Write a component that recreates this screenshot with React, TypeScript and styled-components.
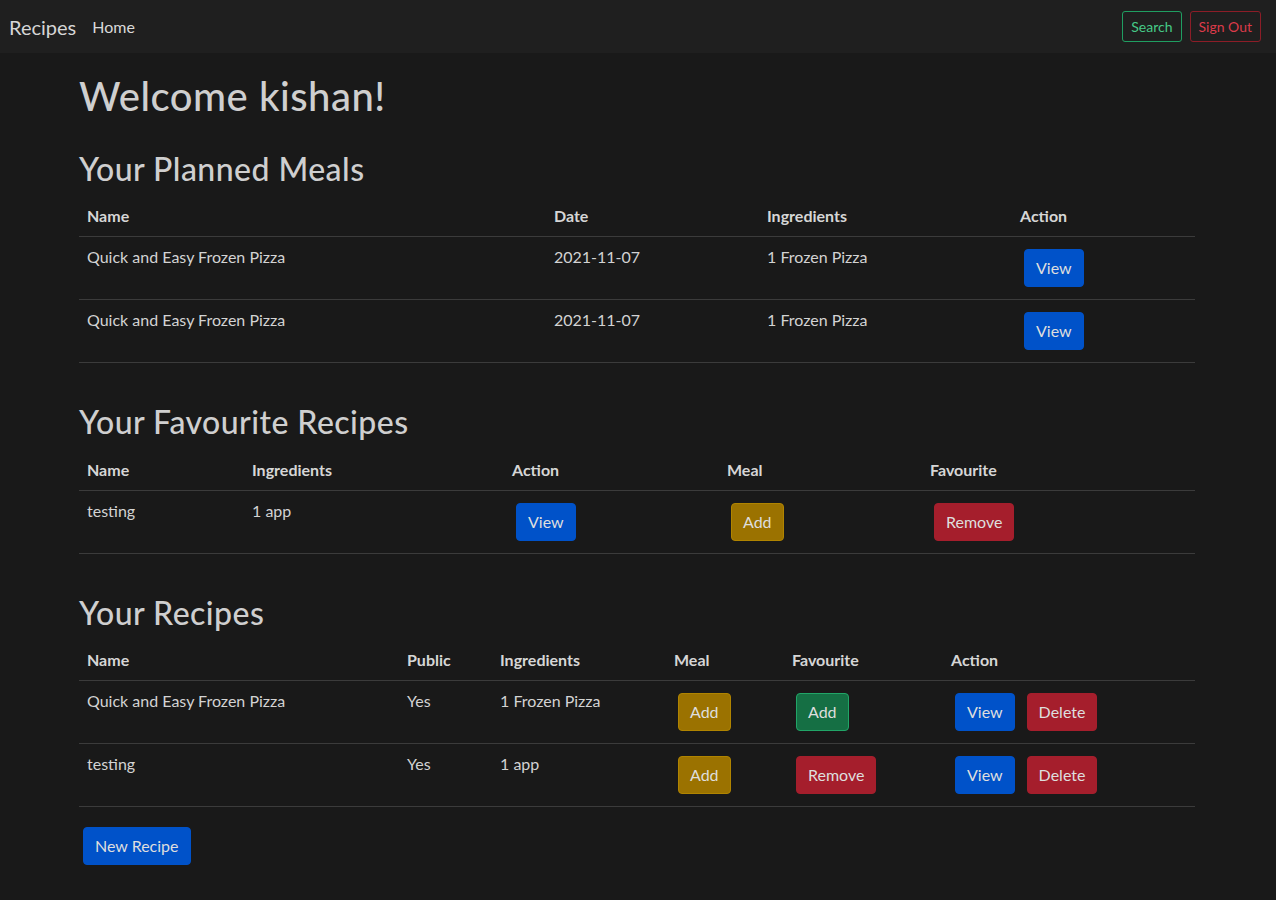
import React from "react";
import styled, { createGlobalStyle, css } from "styled-components";

const GlobalStyle = createGlobalStyle`
  html, body { margin: 0; padding: 0; }
  body {
    background: #191919;
    color: #d3d3d3;
    font-family: Lato, "Open Sans", "Noto Sans", sans-serif;
    font-size: 16px;
    line-height: 1.5;
  }
  * { box-sizing: border-box; }
`;

const Navbar = styled.nav`
  display: flex;
  align-items: center;
  height: 53px;
  padding: 0 15px 0 9px;
  background: #1f1f1f;
`;

const Brand = styled.a`
  font-size: 20px;
  color: #d6d6d6;
  text-decoration: none;
  margin-right: 16px;
`;

const NavLink = styled.a`
  font-size: 16px;
  color: #d9d9d9;
  text-decoration: none;
`;

const NavRight = styled.div`
  margin-left: auto;
  display: flex;
  gap: 8px;
`;

const OutlineButton = styled.button<{ $tone: "success" | "danger" }>`
  font-family: inherit;
  font-size: 14px;
  line-height: 21px;
  padding: 4px 8px;
  border-radius: 3px;
  background: transparent;
  cursor: pointer;
  ${(p) =>
    p.$tone === "success"
      ? css`
          color: #46c987;
          border: 1px solid #1f9e61;
        `
      : css`
          color: #dc3b4a;
          border: 1px solid #8c1d27;
        `}
`;

const Main = styled.main`
  width: 1116px;
  margin: 0 0 0 79px;
  padding: 19px 0 30px;
`;

const Title = styled.h1`
  font-size: 40px;
  font-weight: 500;
  line-height: 1.2;
  letter-spacing: 0.5px;
  margin: 0 0 30px;
  color: #cfcfcf;
`;

const SectionTitle = styled.h2`
  font-size: 32px;
  font-weight: 500;
  line-height: 1.2;
  letter-spacing: 0.45px;
  margin: 0 0 8px;
  color: #cfcfcf;
`;

const Table = styled.table`
  width: 100%;
  border-collapse: collapse;
  table-layout: fixed;
  margin-bottom: 40px;
  &:last-of-type {
    margin-bottom: 16px;
  }
`;

const Col = styled.col<{ $w: number }>`
  width: ${(p) => p.$w}px;
`;

const Th = styled.th`
  text-align: left;
  font-weight: 700;
  padding: 8px;
  vertical-align: bottom;
  border-bottom: 1px solid #3b3b3b;
  color: #d6d6d6;
`;

const Td = styled.td`
  padding: 8px;
  vertical-align: top;
  border-bottom: 1px solid #3b3b3b;
  color: #d3d3d3;
`;

const Actions = styled.div`
  display: flex;
  gap: 4px;
`;

type Tone = "primary" | "warning" | "danger" | "success";

const tones: Record<Tone, { bg: string; border: string }> = {
  primary: { bg: "#0052c9", border: "#0052c9" },
  warning: { bg: "#9b7200", border: "#b08400" },
  danger: { bg: "#a51e2c", border: "#a51e2c" },
  success: { bg: "#156f44", border: "#21a567" },
};

const Button = styled.button<{ $tone: Tone }>`
  display: inline-block;
  font-family: inherit;
  font-size: 16px;
  line-height: 24px;
  padding: 6px 11px;
  margin: 4px;
  border-radius: 4px;
  color: #dedede;
  cursor: pointer;
  background: ${(p) => tones[p.$tone].bg};
  border: 1px solid ${(p) => tones[p.$tone].border};
`;

export default function App() {
  return (
    <>
      <GlobalStyle />
      <Navbar>
        <Brand href="#">Recipes</Brand>
        <NavLink href="#">Home</NavLink>
        <NavRight>
          <OutlineButton $tone="success">Search</OutlineButton>
          <OutlineButton $tone="danger">Sign Out</OutlineButton>
        </NavRight>
      </Navbar>
      <Main>
        <Title>Welcome kishan!</Title>

        <SectionTitle>Your Planned Meals</SectionTitle>
        <Table>
          <colgroup>
            <Col $w={467} />
            <Col $w={213} />
            <Col $w={253} />
            <Col $w={183} />
          </colgroup>
          <thead>
            <tr>
              <Th>Name</Th>
              <Th>Date</Th>
              <Th>Ingredients</Th>
              <Th>Action</Th>
            </tr>
          </thead>
          <tbody>
            {[0, 1].map((i) => (
              <tr key={i}>
                <Td>Quick and Easy Frozen Pizza</Td>
                <Td>2021-11-07</Td>
                <Td>1 Frozen Pizza</Td>
                <Td>
                  <Button $tone="primary">View</Button>
                </Td>
              </tr>
            ))}
          </tbody>
        </Table>

        <SectionTitle>Your Favourite Recipes</SectionTitle>
        <Table>
          <colgroup>
            <Col $w={165} />
            <Col $w={260} />
            <Col $w={215} />
            <Col $w={203} />
            <Col $w={273} />
          </colgroup>
          <thead>
            <tr>
              <Th>Name</Th>
              <Th>Ingredients</Th>
              <Th>Action</Th>
              <Th>Meal</Th>
              <Th>Favourite</Th>
            </tr>
          </thead>
          <tbody>
            <tr>
              <Td>testing</Td>
              <Td>1 app</Td>
              <Td>
                <Button $tone="primary">View</Button>
              </Td>
              <Td>
                <Button $tone="warning">Add</Button>
              </Td>
              <Td>
                <Button $tone="danger">Remove</Button>
              </Td>
            </tr>
          </tbody>
        </Table>

        <SectionTitle>Your Recipes</SectionTitle>
        <Table>
          <colgroup>
            <Col $w={320} />
            <Col $w={93} />
            <Col $w={174} />
            <Col $w={118} />
            <Col $w={159} />
            <Col $w={252} />
          </colgroup>
          <thead>
            <tr>
              <Th>Name</Th>
              <Th>Public</Th>
              <Th>Ingredients</Th>
              <Th>Meal</Th>
              <Th>Favourite</Th>
              <Th>Action</Th>
            </tr>
          </thead>
          <tbody>
            <tr>
              <Td>Quick and Easy Frozen Pizza</Td>
              <Td>Yes</Td>
              <Td>1 Frozen Pizza</Td>
              <Td>
                <Button $tone="warning">Add</Button>
              </Td>
              <Td>
                <Button $tone="success">Add</Button>
              </Td>
              <Td>
                <Actions>
                  <Button $tone="primary">View</Button>
                  <Button $tone="danger">Delete</Button>
                </Actions>
              </Td>
            </tr>
            <tr>
              <Td>testing</Td>
              <Td>Yes</Td>
              <Td>1 app</Td>
              <Td>
                <Button $tone="warning">Add</Button>
              </Td>
              <Td>
                <Button $tone="danger">Remove</Button>
              </Td>
              <Td>
                <Actions>
                  <Button $tone="primary">View</Button>
                  <Button $tone="danger">Delete</Button>
                </Actions>
              </Td>
            </tr>
          </tbody>
        </Table>
        <Button $tone="primary">New Recipe</Button>
      </Main>
    </>
  );
}
